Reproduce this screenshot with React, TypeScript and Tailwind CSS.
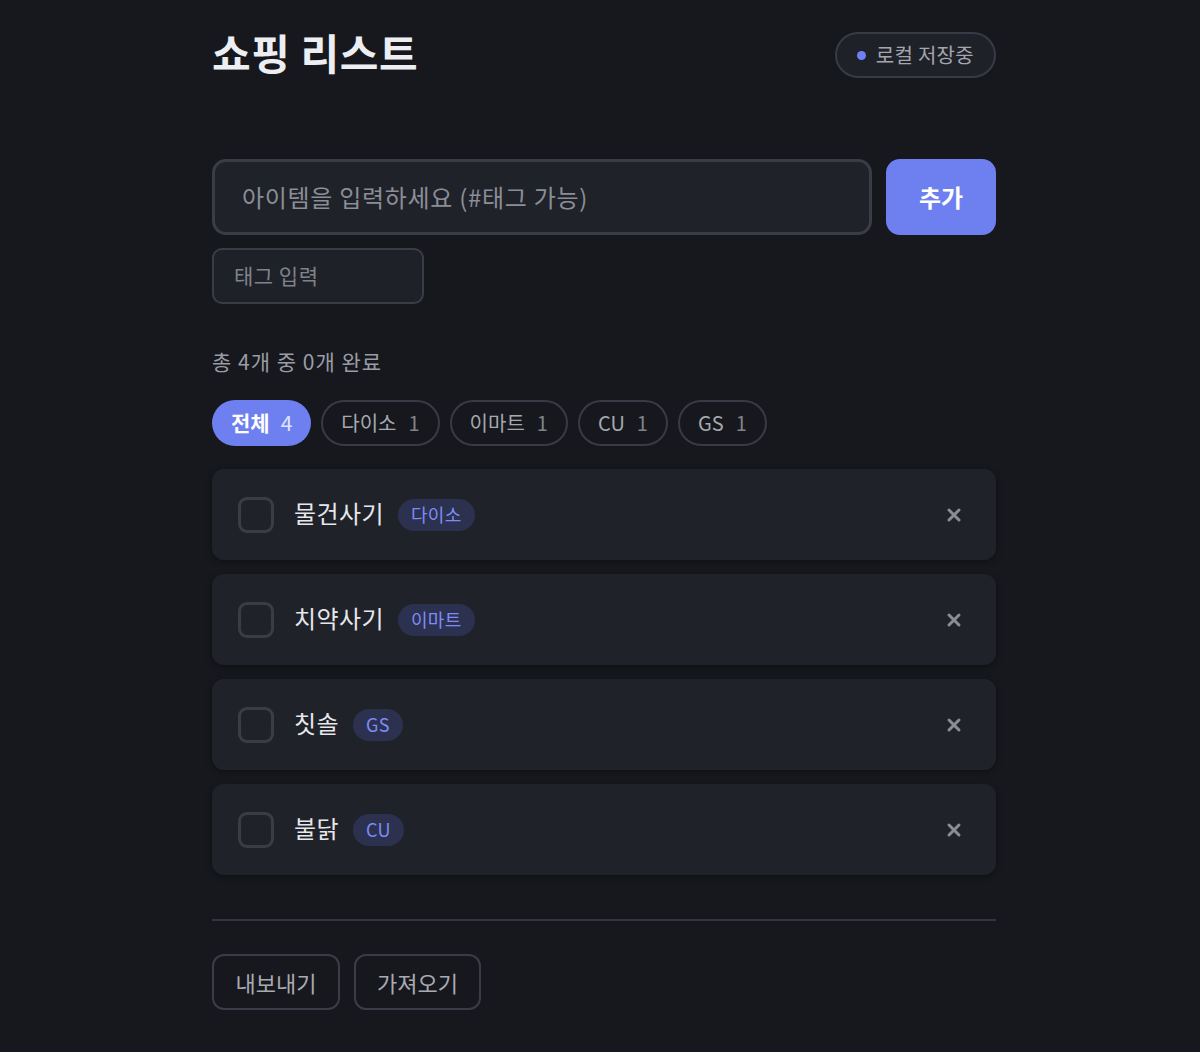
import React from "react";

type Item = { name: string; tag: string };

const items: Item[] = [
  { name: "물건사기", tag: "다이소" },
  { name: "치약사기", tag: "이마트" },
  { name: "칫솔", tag: "GS" },
  { name: "불닭", tag: "CU" },
];

const filters = [
  { label: "전체", count: 4, active: true },
  { label: "다이소", count: 1 },
  { label: "이마트", count: 1 },
  { label: "CU", count: 1 },
  { label: "GS", count: 1 },
];

function CloseIcon() {
  return (
    <svg width="16" height="16" viewBox="0 0 16 16" fill="none">
      <path d="M3 3L13 13M13 3L3 13" stroke="#8a8d97" strokeWidth="3" strokeLinecap="round" />
    </svg>
  );
}

export default function App() {
  return (
    <div
      className="min-h-[1052px] w-full bg-[#17181d] pl-[8px] text-[#e6e7ea]"
      style={{ fontFamily: '"Noto Sans CJK KR", "Noto Sans", sans-serif' }}
    >
      <div className="mx-auto w-[784px] pt-[24px] pb-[42px]">
        {/* header */}
        <div className="flex items-center justify-between">
          <h1 className="text-[42px] font-bold leading-[56px] tracking-[0.6px] text-[#eceef1]">쇼핑 리스트</h1>
          <div className="mt-[6px] flex h-[46px] items-center gap-[10px] rounded-full border-2 border-[#383b45] bg-[#1f2128] pl-[20px] pr-[20px]">
            <span className="h-[9px] w-[9px] rounded-full bg-[#6f80f5]" />
            <span className="text-[20px] tracking-[0.3px] text-[#a3a6ae]">로컬 저장중</span>
          </div>
        </div>

        {/* add form */}
        <div className="mt-[79px] flex gap-[14px]">
          <div className="flex h-[76px] flex-1 items-center rounded-[14px] border-[3px] border-[#3a3d47] bg-[#20222a] px-[27px]">
            <span className="text-[24px] tracking-[0.7px] text-[#8b8e96]">아이템을 입력하세요 (#태그 가능)</span>
          </div>
          <button className="h-[76px] w-[110px] rounded-[14px] bg-[#6e80f0] text-[24px] font-bold text-white">
            추가
          </button>
        </div>
        <div className="mt-[13px] flex h-[56px] w-[212px] items-center rounded-[10px] border-2 border-[#3a3d47] bg-[#1f2128] px-[20px]">
          <span className="text-[21px] tracking-[0.5px] text-[#80838b]">태그 입력</span>
        </div>

        {/* summary */}
        <div className="mt-[43px] text-[21px] leading-[28px] tracking-[1px] text-[#9a9da5]">
          총 4개 중 0개 완료
        </div>

        {/* filters */}
        <div className="mt-[25px] flex gap-[10px]">
          {filters.map((f) =>
            f.active ? (
              <div
                key={f.label}
                className="flex h-[46px] items-center gap-[11px] rounded-full bg-[#6e80f0] px-[19px] text-[21px]"
              >
                <span className="font-bold text-white">{f.label}</span>
                <span className="text-[#dfe3fd]">{f.count}</span>
              </div>
            ) : (
              <div
                key={f.label}
                className="flex h-[46px] items-center gap-[12px] rounded-full border-2 border-[#383b45] px-[18px] text-[20px]"
              >
                <span className="text-[#a6a9b1]">{f.label}</span>
                <span className="text-[#80838b]">{f.count}</span>
              </div>
            )
          )}
        </div>

        {/* list */}
        <div className="mt-[23px] flex flex-col gap-[14px]">
          {items.map((it) => (
            <div
              key={it.name}
              className="flex h-[91px] items-center rounded-[12px] bg-[#20222a] pl-[26px] pr-[34px] shadow-[0_2px_6px_rgba(0,0,0,0.35)]"
            >
              <div className="h-[36px] w-[36px] rounded-[9px] border-[3px] border-[#3a3d47]" />
              <span className="ml-[20px] pb-[3px] text-[24px] tracking-[0.4px] text-[#e6e7ea]">{it.name}</span>
              <span className="ml-[14px] flex h-[32px] items-center rounded-full bg-[#2c3150] px-[13px] text-[18px] tracking-[0.3px] text-[#7d8cf5]">
                {it.tag}
              </span>
              <div className="ml-auto">
                <CloseIcon />
              </div>
            </div>
          ))}
        </div>

        {/* footer */}
        <div className="mt-[44px] h-[2px] bg-[#33363f]" />
        <div className="mt-[33px] flex gap-[14px]">
          <button className="h-[56px] w-[128px] rounded-[12px] border-2 border-[#3a3d47] text-[22px] text-[#a8abb2]">
            내보내기
          </button>
          <button className="h-[56px] w-[127px] rounded-[12px] border-2 border-[#3a3d47] text-[22px] text-[#a8abb2]">
            가져오기
          </button>
        </div>
      </div>
    </div>
  );
}
